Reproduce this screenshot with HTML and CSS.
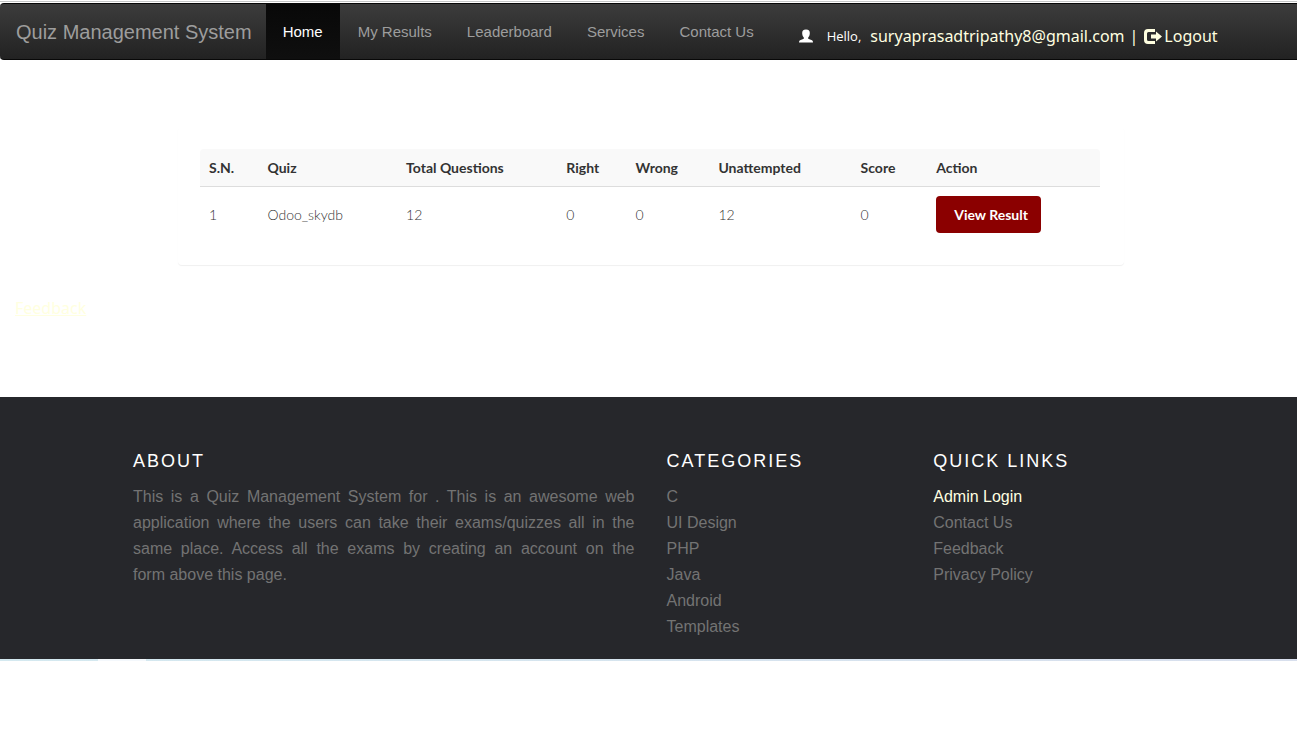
FILE: index.html
```html
<!DOCTYPE html>
<html lang="en">
<head>
<meta charset="utf-8">
<meta name="viewport" content="width=device-width, initial-scale=1">
<title>Quiz Management System</title>
<link rel="stylesheet" href="styles.css">
</head>
<body>
<header class="topline">
  <nav class="navbar">
    <a class="brand" href="#">Quiz Management System</a>
    <ul class="menu">
      <li><a class="menu-link active" href="#">Home</a></li>
      <li><a class="menu-link" href="#">My Results</a></li>
      <li><a class="menu-link" href="#">Leaderboard</a></li>
      <li><a class="menu-link" href="#">Services</a></li>
      <li><a class="menu-link" href="#">Contact Us</a></li>
    </ul>
    <div class="account">
      <svg class="icon-user" viewBox="0 0 14 14" aria-hidden="true"><path d="M7 0.500C9.800 0.500 11 2 10.800 4.600C10.700 6.400 10 7.800 9.200 8.600V9.700L13 11.200Q14 11.800 14 13.500H0Q0 11.800 1 11.200L4.800 9.700V8.600C4 7.800 3.300 6.400 3.200 4.600C3 2 4.200 0.500 7 0.500Z"/></svg>
      <span class="hello">Hello,</span>
      <a class="account-link" href="#">suryaprasadtripathy8@gmail.com</a>
      <span class="divider">|</span>
      <a class="account-link logout" href="#"><svg class="icon-logout" viewBox="0 0 19 17" aria-hidden="true"><path d="M12 1H5Q1 1 1 5V12Q1 16 5 16H12V13H5.500Q4 13 4 11.500V5.500Q4 4 5.500 4H12Z"/><path d="M8 6.500H13V3.500L19 8.500L13 13.500V10.500H8Z"/></svg>Logout</a>
    </div>
  </nav>
</header>
<main class="content">
  <section class="panel">
    <table class="results">
      <colgroup><col class="c-sn"><col class="c-quiz"><col class="c-total"><col class="c-right"><col class="c-wrong"><col class="c-un"><col class="c-score"><col></colgroup>
      <thead>
        <tr><th>S.N.</th><th>Quiz</th><th>Total Questions</th><th>Right</th><th>Wrong</th><th>Unattempted</th><th>Score</th><th>Action</th></tr>
      </thead>
      <tbody>
        <tr><td>1</td><td>Odoo_skydb</td><td>12</td><td>0</td><td>0</td><td>12</td><td>0</td><td><button class="view" type="button">View Result</button></td></tr>
      </tbody>
    </table>
  </section>
  <a class="feedback" href="#">Feedback</a>
</main>
<footer class="footer">
  <div class="footer-grid">
    <section>
      <h2 class="footer-title">ABOUT</h2>
      <p class="about">This is a Quiz Management System for . This is an awesome web application where the users can take their exams/quizzes all in the same place. Access all the exams by creating an account on the form&nbsp;above this page.</p>
    </section>
    <section>
      <h2 class="footer-title">CATEGORIES</h2>
      <ul class="links">
        <li><a href="#">C</a></li><li><a href="#">UI Design</a></li><li><a href="#">PHP</a></li><li><a href="#">Java</a></li><li><a href="#">Android</a></li><li><a href="#">Templates</a></li>
      </ul>
    </section>
    <section>
      <h2 class="footer-title">QUICK LINKS</h2>
      <ul class="links">
        <li><a class="current" href="#">Admin Login</a></li><li><a href="#">Contact Us</a></li><li><a href="#">Feedback</a></li><li><a href="#">Privacy Policy</a></li>
      </ul>
    </section>
  </div>
</footer>
<div class="baseline"><span class="baseline-mark"></span></div>
</body>
</html>
```
FILE: styles.css
```css
* { box-sizing: border-box; }
body { margin: 0; background: #fff; color: #333; font-family: "Liberation Sans", Arial, sans-serif; font-size: 15px; }
a { text-decoration: none; }
ul { list-style: none; margin: 0; padding: 0; }

.topline { margin-top: 1px; margin-right: 5px; padding-top: 1px; border-top: 1px solid #c4c6c6; }
.navbar { display: flex; align-items: stretch; height: 57px; border: 1px solid #080808; border-width: 1px 0; border-radius: 4px 0 0 4px; background: linear-gradient(#3c3c3c, #222); }
.brand { padding: 0 14px 0 16px; line-height: 56px; font-size: 20px; color: #9d9d9d; white-space: nowrap; }
.menu { display: flex; gap: 1px; }
.menu-link { display: block; height: 55px; padding: 0 17px; line-height: 56px; color: #9d9d9d; white-space: nowrap; }
.menu-link.active { color: #fff; background: linear-gradient(#080808, #0f0f0f); }
.account { display: flex; align-items: center; padding: 9px 0 0 28px; white-space: nowrap; color: #fff; font: 13px "Open Sans", sans-serif; }
.icon-user { width: 14px; height: 14px; margin-right: 14px; fill: #fff; }
.hello { margin-right: 9px; }
.account-link, .divider { font: 16px "Noto Sans", sans-serif; color: #ffffe0; }
.divider { margin: 0 5px; }
.logout { display: flex; align-items: center; gap: 2px; }
.icon-logout { width: 19px; height: 17px; fill: #ffffe0; }

.content { padding-top: 67px; }
.panel { width: 73%; max-width: 946px; margin: 0 auto; padding: 22px 24px 23px 22px; border-radius: 4px; box-shadow: 0 1px 1px #f0f0f0; }
.results { width: 100%; table-layout: fixed; border-collapse: separate; border-spacing: 0; font: 300 14px/18px Lato, sans-serif; }
.results th { height: 38px; padding: 0 9px; font-weight: 700; text-align: left; color: #333; background: #f9f9f9; border-bottom: 1px solid #ddd; white-space: nowrap; }
.results th:first-child { border-top-left-radius: 4px; }
.results th:last-child { border-top-right-radius: 4px; }
.results td { padding: 9px; vertical-align: middle; }
.c-sn { width: 6.5%; }
.c-quiz { width: 15.4%; }
.c-total { width: 17.8%; }
.c-right { width: 7.7%; }
.c-wrong { width: 9.2%; }
.c-un { width: 15.8%; }
.c-score { width: 8.4%; }
.view { display: block; min-width: 105px; height: 37px; padding: 0 13px 0 18px; border: 0; border-radius: 4px; background: #8b0000; color: #fff; font: bold 14px Lato, sans-serif; text-align: left; white-space: nowrap; }
.feedback { display: inline-block; margin: 32px 15px 78px; font: 16px/22px "Noto Sans", sans-serif; color: #ffffe0; text-decoration: underline; }

.footer { margin-right: 5px; padding: 50px 0 19px 4px; background: #26272b; color: #737373; font-size: 16px; }
.footer-grid { display: grid; grid-template-columns: 2fr 1fr 1fr; max-width: 1067px; margin: 0 auto; }
.footer-grid section { padding: 0 16px; }
.footer-title { margin: 3px 0 12px; font-size: 18px; line-height: 22px; font-weight: 400; letter-spacing: 2px; color: #fff; white-space: nowrap; }
.about { margin: 0; line-height: 26px; text-align: justify; }
.links { line-height: 26px; }
.links a { color: #737373; }
.links .current { color: #ffffe0; }
.baseline { height: 2px; margin-right: 5px; padding-left: 98px; background: linear-gradient(90deg, #d4e9f0, #d8dfed); }
.baseline-mark { display: block; width: 48px; height: 2px; background: #f4f8fc; }
```
